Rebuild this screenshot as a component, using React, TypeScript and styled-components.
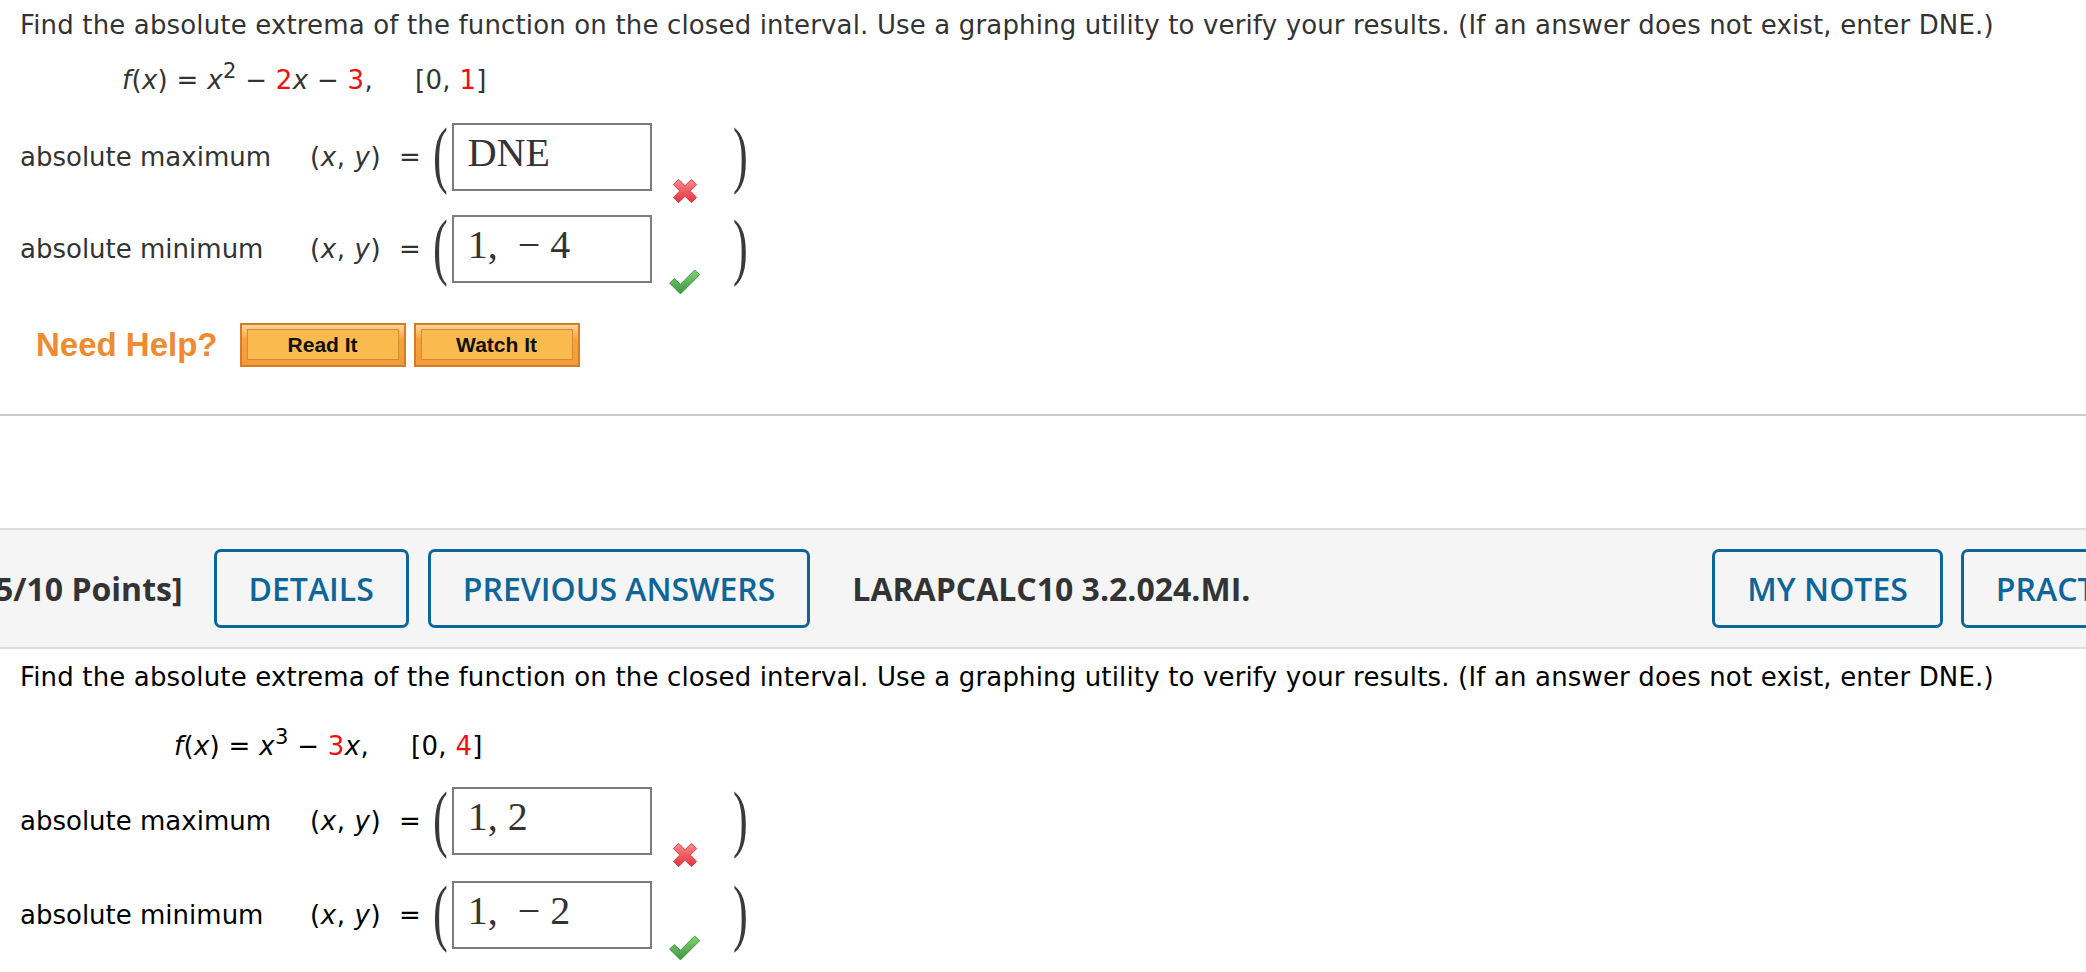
import * as React from 'react';
import styled, { createGlobalStyle } from 'styled-components';

const GlobalStyle = createGlobalStyle`
  html, body {
    margin: 0;
    padding: 0;
    background: #ffffff;
  }
  body {
    width: 2086px;
    height: 972px;
    overflow: hidden;
    font-family: 'DejaVu Sans', Verdana, sans-serif;
  }
`;

const Cross = () => (
  <svg width="28" height="28" viewBox="0 0 24 24">
    <defs>
      <linearGradient id="crossFill" x1="0" y1="0" x2="0" y2="1">
        <stop offset="0" stopColor="#f98a90" />
        <stop offset="1" stopColor="#e2323b" />
      </linearGradient>
    </defs>
    <path
      d="M2 6.5 L6.5 2 L12 7.5 L17.5 2 L22 6.5 L16.5 12 L22 17.5 L17.5 22 L12 16.5 L6.5 22 L2 17.5 L7.5 12 Z"
      fill="url(#crossFill)"
      stroke="#da3a42"
      strokeWidth="0.8"
      strokeLinejoin="round"
    />
  </svg>
);

const Check = () => (
  <svg width="34" height="30" viewBox="0 0 30 26">
    <defs>
      <linearGradient id="checkFill" x1="0" y1="0" x2="0" y2="1">
        <stop offset="0" stopColor="#84d176" />
        <stop offset="1" stopColor="#3d963f" />
      </linearGradient>
    </defs>
    <path
      d="M1.5 14 L5.5 10 L11 15 L23.5 2.5 L28 6.5 L11 23.5 Z"
      fill="url(#checkFill)"
      stroke="#3b903e"
      strokeWidth="0.8"
      strokeLinejoin="round"
    />
  </svg>
);

type Answer = { label: string; value: React.ReactNode; correct: boolean };

const AnswerRows = ({ rows, $gap }: { rows: Answer[]; $gap: number }) => (
  <Rows $gap={$gap}>
    {rows.map((r) => (
      <AnswerRow key={r.label}>
        <Label>{r.label}</Label>
        <Coord>
          (<i>x</i>, <i>y</i>)&nbsp; =
        </Coord>
        <Paren>(</Paren>
        <AnswerBox>{r.value}</AnswerBox>
        <Mark>{r.correct ? <Check /> : <Cross />}</Mark>
        <Paren $close>)</Paren>
      </AnswerRow>
    ))}
  </Rows>
);

const prompt =
  'Find the absolute extrema of the function on the closed interval. Use a graphing utility to verify your results. (If an answer does not exist, enter DNE.)';

const App = () => {
  return (
    <>
      <GlobalStyle />
      <Page>
        <Question $color="#333333">
          <Prompt>{prompt}</Prompt>
          <Formula $indent={102} $top={22}>
            <i>f</i>(<i>x</i>) = <i>x</i>
            <Sup>2</Sup> − <Red>2</Red>
            <i>x</i> − <Red>3</Red>,<Interval>[0, <Red>1</Red>]</Interval>
          </Formula>
          <Spacer $h={23} />
          <AnswerRows
            $gap={24}
            rows={[
              { label: 'absolute maximum', value: 'DNE', correct: false },
              { label: 'absolute minimum', value: '1,  − 4', correct: true },
            ]}
          />
          <HelpRow>
            <HelpLabel>Need Help?</HelpLabel>
            <HelpButton>
              <HelpFace>Read It</HelpFace>
            </HelpButton>
            <HelpButton>
              <HelpFace>Watch It</HelpFace>
            </HelpButton>
          </HelpRow>
        </Question>
        <Divider />
        <HeaderBar>
          <Points>5/10 Points]</Points>
          <OutlineButton $ml={31}>DETAILS</OutlineButton>
          <OutlineButton $ml={19}>PREVIOUS ANSWERS</OutlineButton>
          <Code>LARAPCALC10 3.2.024.MI.</Code>
          <OutlineButton $ml={462}>MY NOTES</OutlineButton>
          <OutlineButton $ml={18}>PRACTICE ANOTHER</OutlineButton>
        </HeaderBar>
        <Question $color="#000000" $top={13}>
          <Prompt>{prompt}</Prompt>
          <Formula $indent={154} $top={36}>
            <i>f</i>(<i>x</i>) = <i>x</i>
            <Sup>3</Sup> − <Red>3</Red>
            <i>x</i>,<Interval>[0, <Red>4</Red>]</Interval>
          </Formula>
          <Spacer $h={21} />
          <AnswerRows
            $gap={26}
            rows={[
              { label: 'absolute maximum', value: '1, 2', correct: false },
              { label: 'absolute minimum', value: '1,  − 2', correct: true },
            ]}
          />
        </Question>
      </Page>
    </>
  );
};

export default App;

const Page = styled.div`
  display: flex;
  flex-direction: column;
  width: 2086px;
`;

const Question = styled.section<{ $color: string; $top?: number }>`
  display: flex;
  flex-direction: column;
  padding: ${(p) => p.$top ?? 10}px 0 0 20px;
  color: ${(p) => p.$color};
  font-size: 26px;
`;

const Prompt = styled.div`
  line-height: 30px;
  letter-spacing: 0.15px;
  white-space: nowrap;
`;

const Formula = styled.div<{ $indent: number; $top: number }>`
  margin: ${(p) => p.$top}px 0 0 ${(p) => p.$indent}px;
  line-height: 36px;
  letter-spacing: 0.3px;
  white-space: pre;
`;

const Sup = styled.span`
  font-size: 21px;
  position: relative;
  top: -11px;
`;

const Red = styled.span`
  color: #f01010;
`;

const Interval = styled.span`
  margin-left: 42px;
`;

const Spacer = styled.div<{ $h: number }>`
  height: ${(p) => p.$h}px;
`;

const Rows = styled.div<{ $gap: number }>`
  display: flex;
  flex-direction: column;
  gap: ${(p) => p.$gap}px;
`;

const AnswerRow = styled.div`
  display: flex;
  align-items: center;
  height: 68px;
`;

const Label = styled.span`
  width: 290px;
`;

const Coord = styled.span`
  width: 119px;
  white-space: nowrap;
  letter-spacing: 0.6px;
`;

const Paren = styled.span<{ $close?: boolean }>`
  font-family: 'Liberation Serif', 'DejaVu Serif', serif;
  font-size: 74px;
  line-height: 68px;
  color: #3a3a3a;
  transform: scaleX(0.6);
  margin: -6px ${(p) => (p.$close ? 0 : -1)}px 0 ${(p) => (p.$close ? 26 : -1)}px;
`;

const AnswerBox = styled.div`
  box-sizing: border-box;
  width: 200px;
  height: 68px;
  border: 2px solid #7c7c7c;
  padding: 8px 0 0 14px;
  font-family: 'Liberation Serif', 'DejaVu Serif', serif;
  font-size: 40px;
  line-height: 40px;
  color: #333333;
  white-space: pre;
`;

const Mark = styled.div`
  display: flex;
  align-self: flex-end;
  margin: 0 0 -14px 16px;
  width: 34px;
  justify-content: center;
`;

const HelpRow = styled.div`
  display: flex;
  align-items: center;
  margin-top: 40px;
  padding-left: 16px;
`;

const HelpLabel = styled.span`
  font-family: 'Liberation Sans', Arial, sans-serif;
  font-weight: 700;
  font-size: 33px;
  color: #ee8a30;
  margin-right: 22px;
`;

const HelpButton = styled.div`
  box-sizing: border-box;
  width: 166px;
  height: 44px;
  margin-right: 8px;
  padding: 4px 5px 5px;
  border: 2px solid #d27c2c;
  background: linear-gradient(#fcd79a, #f6a43c 35%, #f39b35);
  display: flex;
`;

const HelpFace = styled.span`
  flex: 1;
  display: flex;
  align-items: center;
  justify-content: center;
  border: 1px solid #cf8a3a;
  background: #fbba4e;
  font-family: 'Liberation Sans', Arial, sans-serif;
  font-weight: 700;
  font-size: 21px;
  color: #111111;
`;

const Divider = styled.div`
  height: 2px;
  background: #cccccc;
  margin-top: 47px;
`;

const HeaderBar = styled.div`
  display: flex;
  align-items: center;
  height: 117px;
  margin-top: 112px;
  background: #f5f5f5;
  border-top: 2px solid #dddddd;
  border-bottom: 2px solid #dddddd;
  overflow: hidden;
  white-space: nowrap;
  font-family: 'Open Sans', sans-serif;
  font-size: 32px;
`;

const Points = styled.span`
  flex-shrink: 0;
  font-weight: 700;
  color: #333333;
  margin-left: -5px;
`;

const OutlineButton = styled.span<{ $ml: number }>`
  box-sizing: border-box;
  flex-shrink: 0;
  height: 79px;
  display: flex;
  align-items: center;
  padding: 0 32px;
  margin-left: ${(p) => p.$ml}px;
  border: 3px solid #0d6598;
  border-radius: 7px;
  color: #0d6598;
  font-weight: 600;
`;

const Code = styled.span`
  flex-shrink: 0;
  font-weight: 700;
  color: #333333;
  margin-left: 42px;
`;
